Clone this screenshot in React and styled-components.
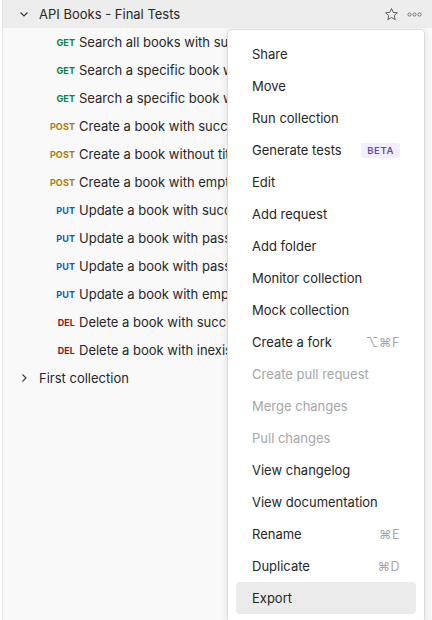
import React from "react";
import styled, { createGlobalStyle } from "styled-components";

const GlobalStyle = createGlobalStyle`
  html, body {
    margin: 0;
    padding: 0;
    background: #ffffff;
    font-family: Inter, "Noto Sans", sans-serif;
    -webkit-font-smoothing: antialiased;
  }
`;

const Page = styled.div`
  position: relative;
  height: 620px;
  overflow: hidden;
  padding-left: 2px;
`;

const Sidebar = styled.div`
  height: 100%;
  background: #f9f9f9;
  border-left: 1px solid #e4e4e4;
  display: flex;
  flex-direction: column;
`;

const Header = styled.div`
  height: 28px;
  display: flex;
  align-items: center;
  background: #ededed;
  padding: 0 10px 0 15px;
  color: #262626;
  font-size: 13px;
`;

const Chevron = styled.span`
  width: 12px;
  height: 12px;
  display: flex;
  align-items: center;
  justify-content: center;
  margin-right: 9px;
  color: #3a3a3a;
`;

const Name = styled.span`
  flex: 1;
`;

const Actions = styled.div`
  display: flex;
  align-items: center;
  gap: 8px;
  color: #6b6b6b;
`;

const Row = styled.div`
  height: 28px;
  display: flex;
  align-items: center;
  padding-left: ${({ indent }) => indent}px;
  font-size: 13px;
  color: #262626;
  white-space: nowrap;
`;

const methodColors = {
  GET: "#0b8043",
  POST: "#ab7b09",
  PUT: "#0b5cb8",
  DEL: "#8e1a10",
};

const Method = styled.span`
  width: 35px;
  text-align: right;
  margin-right: 4px;
  font-size: 9px;
  font-weight: 700;
  letter-spacing: 0.1px;
  color: ${({ m }) => methodColors[m]};
`;

const Menu = styled.div`
  position: absolute;
  left: 227px;
  top: 29px;
  width: 180px;
  padding: 8px;
  background: #ffffff;
  border: 1px solid #dcdcdc;
  border-radius: 4px;
  box-shadow: 0 2px 8px rgba(0, 0, 0, 0.1);
`;

const Item = styled.div`
  height: 32px;
  display: flex;
  align-items: center;
  padding: 0 16px;
  border-radius: 4px;
  font-size: 13px;
  color: ${({ disabled }) => (disabled ? "#a6a6a6" : "#262626")};
  background: ${({ active }) => (active ? "#ebebeb" : "transparent")};
`;

const Label = styled.span`
  flex: 1;
`;

const Shortcut = styled.span`
  color: #a6a6a6;
  font-size: 12.5px;
  letter-spacing: 0.5px;
`;

const Badge = styled.span`
  height: 15px;
  padding: 0 6px;
  display: flex;
  align-items: center;
  border-radius: 3px;
  background: #f2edff;
  color: #6b4aa8;
  font-size: 9.5px;
  font-weight: 600;
  letter-spacing: 0.6px;
`;

const requests = [
  ["GET", "Search all books with success"],
  ["GET", "Search a specific book with success"],
  ["GET", "Search a specific book with inexistent id"],
  ["POST", "Create a book with success"],
  ["POST", "Create a book without title"],
  ["POST", "Create a book with empty fields"],
  ["PUT", "Update a book with success"],
  ["PUT", "Update a book with passing id"],
  ["PUT", "Update a book with passing title"],
  ["PUT", "Update a book with empty fields"],
  ["DEL", "Delete a book with success"],
  ["DEL", "Delete a book with inexistent id"],
];

const menuItems = [
  { label: "Share" },
  { label: "Move" },
  { label: "Run collection" },
  { label: "Generate tests", badge: "BETA" },
  { label: "Edit" },
  { label: "Add request" },
  { label: "Add folder" },
  { label: "Monitor collection" },
  { label: "Mock collection" },
  { label: "Create a fork", shortcut: "⌥⌘F" },
  { label: "Create pull request", disabled: true },
  { label: "Merge changes", disabled: true },
  { label: "Pull changes", disabled: true },
  { label: "View changelog" },
  { label: "View documentation" },
  { label: "Rename", shortcut: "⌘E" },
  { label: "Duplicate", shortcut: "⌘D" },
  { label: "Export", active: true },
];

const ChevronDown = () => (
  <svg width="10" height="10" viewBox="0 0 10 10" fill="none">
    <path d="M1.5 3.5 L5 7 L8.5 3.5" stroke="currentColor" strokeWidth="1.1" />
  </svg>
);

const ChevronRight = () => (
  <svg width="10" height="10" viewBox="0 0 10 10" fill="none">
    <path d="M3.5 1.5 L7 5 L3.5 8.5" stroke="currentColor" strokeWidth="1.1" />
  </svg>
);

const StarIcon = () => (
  <svg width="15" height="15" viewBox="0 0 16 16" fill="none">
    <path
      d="M8 1.6 L9.85 5.75 L14.3 6.15 L10.95 9.1 L11.95 13.5 L8 11.2 L4.05 13.5 L5.05 9.1 L1.7 6.15 L6.15 5.75 Z"
      stroke="#555"
      strokeWidth="1"
      strokeLinejoin="round"
    />
  </svg>
);

const DotsIcon = () => (
  <svg width="15" height="15" viewBox="0 0 15 15" fill="none">
    <circle cx="2.5" cy="7.5" r="1.6" stroke="#777" strokeWidth="1" />
    <circle cx="7.5" cy="7.5" r="1.6" stroke="#777" strokeWidth="1" />
    <circle cx="12.5" cy="7.5" r="1.6" stroke="#777" strokeWidth="1" />
  </svg>
);

const App = () => (
  <Page>
    <GlobalStyle />
    <Sidebar>
      <Header>
        <Chevron>
          <ChevronDown />
        </Chevron>
        <Name>API Books - Final Tests</Name>
        <Actions>
          <StarIcon />
          <DotsIcon />
        </Actions>
      </Header>
      {requests.map(([m, text], i) => (
        <Row key={i} indent={37}>
          <Method m={m}>{m}</Method>
          {text}
        </Row>
      ))}
      <Row indent={15}>
        <Chevron>
          <ChevronRight />
        </Chevron>
        First collection
      </Row>
    </Sidebar>
    <Menu>
      {menuItems.map((it) => (
        <Item key={it.label} disabled={it.disabled} active={it.active}>
          <Label>{it.label}</Label>
          {it.badge && <Badge>{it.badge}</Badge>}
          {it.shortcut && <Shortcut>{it.shortcut}</Shortcut>}
        </Item>
      ))}
    </Menu>
  </Page>
);

export default App;
